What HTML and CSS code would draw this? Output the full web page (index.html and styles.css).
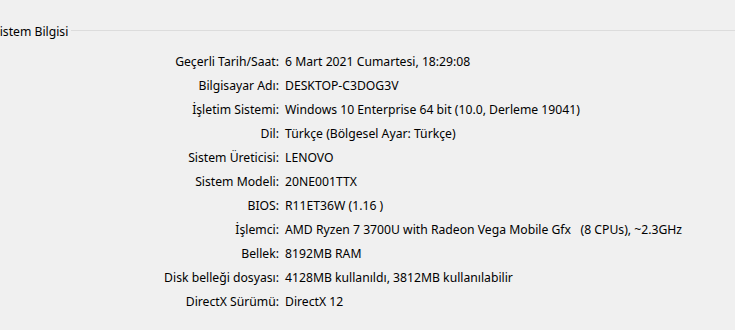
FILE: index.html
```html
<!DOCTYPE html>
<html lang="tr">
<head>
<meta charset="utf-8">
<link rel="stylesheet" href="styles.css">
</head>
<body>
<div class="group">
  <div class="group-head">
    <span class="group-title">Sistem Bilgisi</span>
    <span class="group-line"></span>
  </div>
  <div class="info">
    <div class="label">Geçerli Tarih/Saat:</div><div class="value">6 Mart 2021 Cumartesi, 18:29:08</div>
    <div class="label">Bilgisayar Adı:</div><div class="value">DESKTOP-C3DOG3V</div>
    <div class="label">İşletim Sistemi:</div><div class="value">Windows 10 Enterprise 64 bit (10.0, Derleme 19041)</div>
    <div class="label">Dil:</div><div class="value">Türkçe (Bölgesel Ayar: Türkçe)</div>
    <div class="label">Sistem Üreticisi:</div><div class="value">LENOVO</div>
    <div class="label">Sistem Modeli:</div><div class="value">20NE001TTX</div>
    <div class="label">BIOS:</div><div class="value">R11ET36W (1.16 )</div>
    <div class="label">İşlemci:</div><div class="value">AMD Ryzen 7 3700U with Radeon Vega Mobile Gfx &nbsp;&nbsp;(8 CPUs), ~2.3GHz</div>
    <div class="label">Bellek:</div><div class="value">8192MB RAM</div>
    <div class="label">Disk belleği dosyası:</div><div class="value">4128MB kullanıldı, 3812MB kullanılabilir</div>
    <div class="label">DirectX Sürümü:</div><div class="value">DirectX 12</div>
  </div>
</div>
</body>
</html>
```
FILE: styles.css
```css
html, body {
  margin: 0;
  padding: 0;
  background: #f0f0f0;
  overflow: hidden;
}
body {
  width: 735px;
  height: 330px;
  font-family: "Noto Sans", "Open Sans", sans-serif;
  font-size: 12.2px;
  color: #000;
}
.group {
  padding-top: 22px;
}
.group-head {
  display: flex;
  align-items: center;
  height: 18px;
  margin-left: -7px;
}
.group-title {
  white-space: nowrap;
  padding-right: 3px;
}
.group-line {
  flex: 1;
  border-top: 1px solid #dcdcdc;
  margin-top: -1px;
}
.info {
  display: grid;
  grid-template-columns: 279px auto;
  column-gap: 6px;
  grid-auto-rows: 24px;
  margin-top: 9px;
  align-items: center;
}
.label {
  text-align: right;
  white-space: nowrap;
}
.value {
  white-space: nowrap;
}
```
